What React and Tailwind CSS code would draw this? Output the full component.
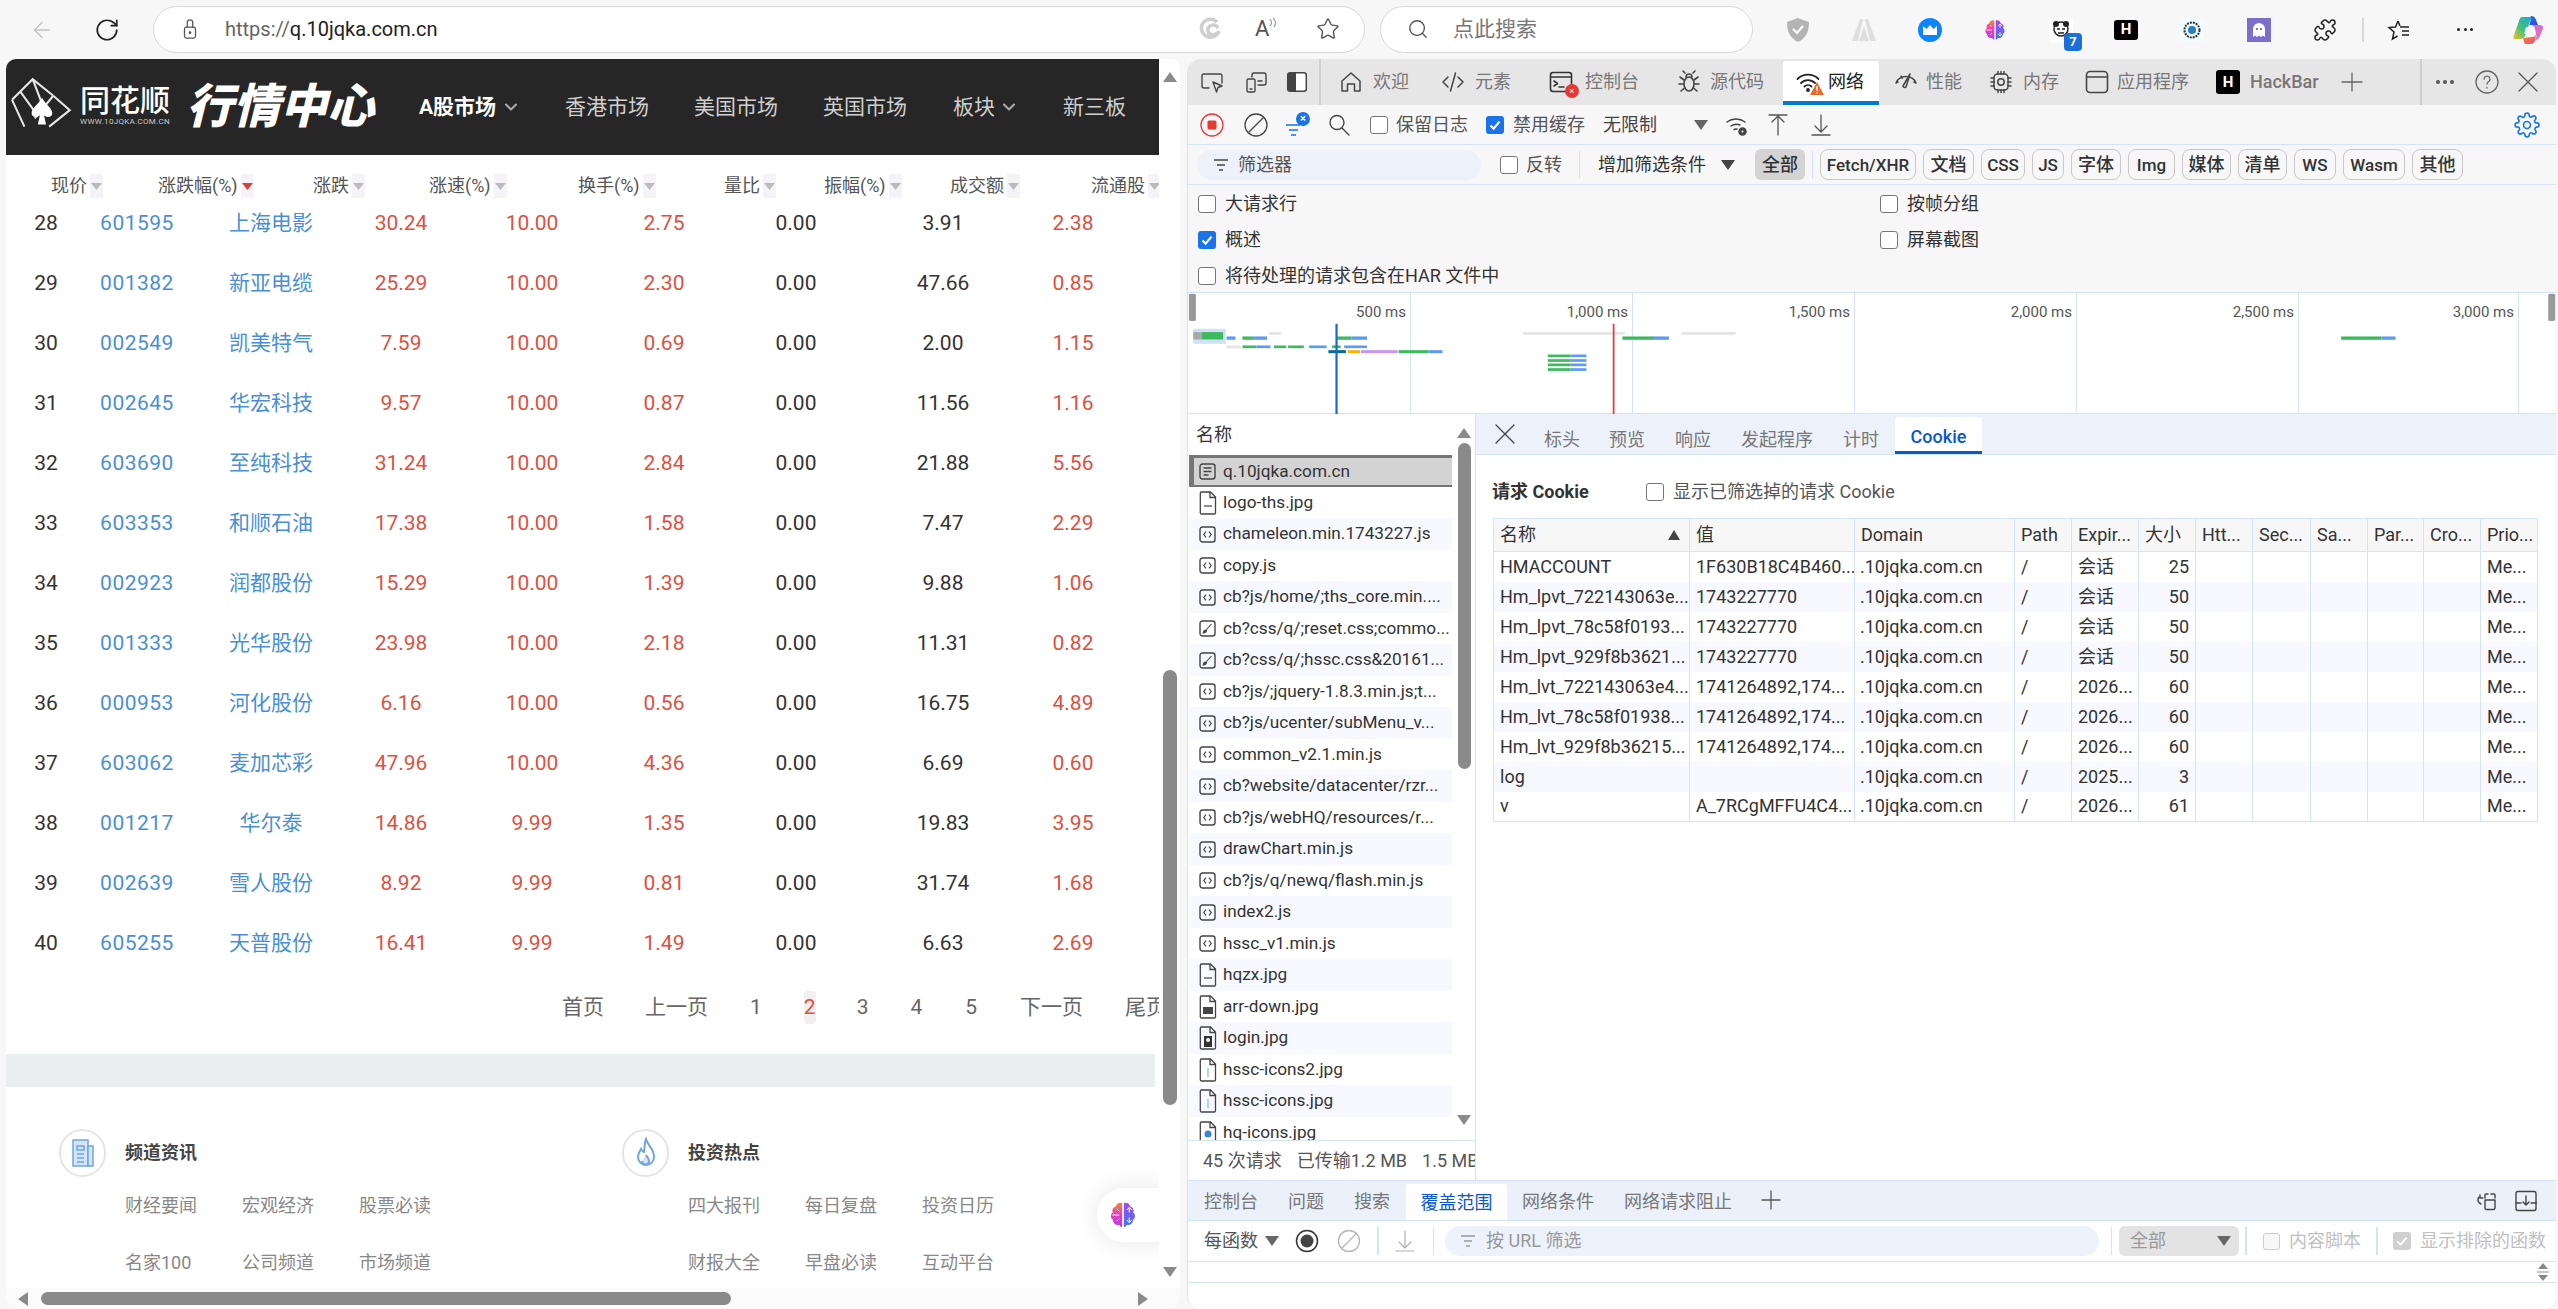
import React from 'react';
import { ArrowLeft, RotateCw, Star, Search, Puzzle, ChevronDown } from 'lucide-react';

const stocks = [
  ['28','601595','上海电影','30.24','10.00','2.75','0.00','3.91','2.38'],
  ['29','001382','新亚电缆','25.29','10.00','2.30','0.00','47.66','0.85'],
  ['30','002549','凯美特气','7.59','10.00','0.69','0.00','2.00','1.15'],
  ['31','002645','华宏科技','9.57','10.00','0.87','0.00','11.56','1.16'],
  ['32','603690','至纯科技','31.24','10.00','2.84','0.00','21.88','5.56'],
  ['33','603353','和顺石油','17.38','10.00','1.58','0.00','7.47','2.29'],
  ['34','002923','润都股份','15.29','10.00','1.39','0.00','9.88','1.06'],
  ['35','001333','光华股份','23.98','10.00','2.18','0.00','11.31','0.82'],
  ['36','000953','河化股份','6.16','10.00','0.56','0.00','16.75','4.89'],
  ['37','603062','麦加芯彩','47.96','10.00','4.36','0.00','6.69','0.60'],
  ['38','001217','华尔泰','14.86','9.99','1.35','0.00','19.83','3.95'],
  ['39','002639','雪人股份','8.92','9.99','0.81','0.00','31.74','1.68'],
  ['40','605255','天普股份','16.41','9.99','1.49','0.00','6.63','2.69'],
];
const heads = [['现价',0],['涨跌幅(%)',1],['涨跌',0],['涨速(%)',0],['换手(%)',0],['量比',0],['振幅(%)',0],['成交额',0],['流通股',0]];
const files = [
  ['q.10jqka.com.cn','doc'],['logo-ths.jpg','img'],['chameleon.min.1743227.js','js'],['copy.js','js'],
  ['cb?js/home/;ths_core.min....','js'],['cb?css/q/;reset.css;commo...','css'],['cb?css/q/;hssc.css&20161...','css'],
  ['cb?js/;jquery-1.8.3.min.js;t...','js'],['cb?js/ucenter/subMenu_v...','js'],['common_v2.1.min.js','js'],
  ['cb?website/datacenter/rzr...','js'],['cb?js/webHQ/resources/r...','js'],['drawChart.min.js','js'],
  ['cb?js/q/newq/flash.min.js','js'],['index2.js','js'],['hssc_v1.min.js','js'],['hqzx.jpg','img'],
  ['arr-down.jpg','img2'],['login.jpg','img3'],['hssc-icons2.jpg','img4'],['hssc-icons.jpg','img4'],['hq-icons.jpg','img5'],
];
const cookieHead = ['名称','值','Domain','Path','Expir...','大小','Htt...','Sec...','Sa...','Par...','Cro...','Prio...'];
const cookies = [
  ['HMACCOUNT','1F630B18C4B460...','会话','25'],
  ['Hm_lpvt_722143063e...','1743227770','会话','50'],
  ['Hm_lpvt_78c58f0193...','1743227770','会话','50'],
  ['Hm_lpvt_929f8b3621...','1743227770','会话','50'],
  ['Hm_lvt_722143063e4...','1741264892,174...','2026...','60'],
  ['Hm_lvt_78c58f01938...','1741264892,174...','2026...','60'],
  ['Hm_lvt_929f8b36215...','1741264892,174...','2026...','60'],
  ['log','','2025...','3'],
  ['v','A_7RCgMFFU4C4...','2026...','61'],
];
const pills = [
  ['Fetch/XHR','w-[96px] text-[17px]'],['文档','w-[51px] text-[18px]'],['CSS','w-[44px] text-[17px]'],['JS','w-[32px] text-[17px]'],['字体','w-[50px] text-[18px]'],['Img','w-[47px] text-[17px]'],
  ['媒体','w-[49px] text-[18px]'],['清单','w-[49px] text-[18px]'],['WS','w-[42px] text-[17px]'],['Wasm','w-[62px] text-[17px]'],['其他','w-[51px] text-[18px]'],
];
const green = [[24,460,24,22],[70,473,12,10],[178,473,16,10],[503,473,36,10],[1322,473,46,10],[70,500,16,8],[106,500,14,8],[122,500,18,8],[172,500,10,8],[248,514,34,9],[418,527,26,8],[418,541,26,8],[418,554,26,8],[418,568,26,8]];
const blue = [[52,473,10,10],[82,473,16,10],[194,473,18,10],[539,473,17,10],[1368,473,16,10],[86,500,16,8],[146,500,20,8],[186,500,26,8],[282,514,16,9],[444,527,18,8],[444,541,18,8],[444,554,18,8],[444,568,18,8]];
const gray = [[100,460,14,8],[390,460,116,8],[570,460,62,8],[52,500,16,9]];
const marks = [['500 ms','w-[221px]'],['1,000 ms','w-[222px]'],['1,500 ms','w-[222px]'],['2,000 ms','w-[222px]'],['2,500 ms','w-[222px]'],['3,000 ms','w-[220px]']];

function Ic({ children, w = 24, h = 24, sw = 1.6, c = '#444', cn = '' }) {
  return <svg width={w} height={h} viewBox="0 0 24 24" fill="none" stroke={c} strokeWidth={sw} strokeLinecap="round" strokeLinejoin="round" className={'shrink-0 ' + cn}>{children}</svg>;
}
const Tri = ({ cn = '', c = '#666' }) => <svg width="14" height="12" viewBox="0 0 14 12" className={'shrink-0 ' + cn}><path d="M0 1h14L7 11z" fill={c} /></svg>;
const Arrow = ({ active }) => (
  <span className="w-[13px] h-[24px] bg-[#f5f3f7] flex items-center justify-center shrink-0">
    <svg width="11" height="7" viewBox="0 0 11 7"><path d="M0 0h11L5.5 7z" fill={active ? '#d9403a' : '#bbb'} /></svg>
  </span>
);
const Cb = ({ checked, cn = '' }) => checked
  ? <span className={'w-[18px] h-[18px] rounded-[3px] bg-[#1a73e8] flex items-center justify-center shrink-0 ' + cn}><svg width="14" height="14" viewBox="0 0 14 14"><path d="M2.5 7.5 5.6 10.6 11.5 3.6" stroke="#fff" strokeWidth="2.2" fill="none" /></svg></span>
  : <span className={'w-[18px] h-[18px] rounded-[3px] border-[1.5px] border-[#777] bg-white shrink-0 ' + cn} />;
const HBlack = ({ s = 'w-[24px] h-[24px]' }) => <span className={s + ' rounded-[3px] bg-black text-white font-bold text-[15px] flex items-center justify-center shrink-0'}>H</span>;

function Brain({ w = 24, h = 24 }) {
  return (
    <svg width={w} height={h} viewBox="0 0 24 24" className="shrink-0">
      <defs>
        <linearGradient id="bl" x1="0" y1="0" x2="0" y2="1"><stop offset="0" stopColor="#f58a2a" /><stop offset="0.45" stopColor="#e93fbb" /><stop offset="1" stopColor="#b43df0" /></linearGradient>
        <linearGradient id="br" x1="0" y1="0" x2="0" y2="1"><stop offset="0" stopColor="#a848ee" /><stop offset="1" stopColor="#3d78ee" /></linearGradient>
      </defs>
      <path d="M11.3 2.5C9 1.6 6.6 3 6.4 5.2 4 5.600 3 8 3.800 10 1.800 11.600 2 14.800 4 16c0 2.800 2.600 4.600 5 3.800.6 1.400 1.600 2 2.300 1.700z" fill="url(#bl)" />
      <path d="M12.700 2.500C15 1.600 17.400 3 17.600 5.200 20 5.600 21 8 20.200 10c2 1.600 1.800 4.800-.2 6 0 2.800-2.600 4.600-5 3.800-.6 1.400-1.600 2-2.300 1.700z" fill="url(#br)" />
      <path d="M3.500 12H9M7 7l2 2M7 17l2-2M15 8l2-2 2 2M15 16l2 2 2-2M17 6v4M17 14v4" stroke="#fff" strokeWidth="0.8" fill="none" />
    </svg>
  );
}

function Copilot() {
  return (
    <svg width="32" height="32" viewBox="0 0 32 32" className="shrink-0">
      <defs>
        <linearGradient id="c1" x1="0" y1="1" x2="1" y2="0"><stop offset="0" stopColor="#f4c21f" /><stop offset="0.45" stopColor="#3cc07a" /><stop offset="1" stopColor="#1ea5e8" /></linearGradient>
        <linearGradient id="c2" x1="0" y1="0" x2="1" y2="1"><stop offset="0" stopColor="#1f6ff0" /><stop offset="1" stopColor="#3a46d8" /></linearGradient>
        <linearGradient id="c3" x1="0" y1="0" x2="1" y2="1"><stop offset="0" stopColor="#c86de8" /><stop offset="1" stopColor="#f06f9a" /></linearGradient>
        <linearGradient id="c4" x1="0" y1="0" x2="1" y2="1"><stop offset="0" stopColor="#f3853a" /><stop offset="1" stopColor="#ee4f7c" /></linearGradient>
      </defs>
      <path d="M10 3h12c-3 1-4 4-5 7l-4 12c-1 2-3 3-5 3H3c-1.500 0-2-1-1.500-2.500L7 7c.6-2.400 1.600-4 3-4z" fill="url(#c1)" />
      <path d="M19 2c3 0 4 1.500 5 4l2 5h-8l-1 1 2-7c.4-1.500 0-3-1-3z" fill="url(#c2)" />
      <path d="M19 11h8c2.500 0 4 1 4 2.500 0 .8-.3 1.500-.5 2.500l-3 7c-1 2-2.500 3-4 3-1 0 .5-1 1-3l-1-6c-.5-3-2-6-4.500-6z" fill="url(#c3)" />
      <path d="M11 24l9-1c2 0 3-1 4-2l-.8 5c-.5 2-2 4-4.200 4h-5c-2 0-2-3-3-6z" fill="url(#c4)" />
      <path d="M14 13h4l-2 7h-4z" fill="#fff" fillOpacity="0.85" />
    </svg>
  );
}

function FileIcon({ t }) {
  if (t === 'js' || t === 'doc' || t === 'css') {
    return (
      <svg width="17" height="17" viewBox="0 0 17 17" className="shrink-0" fill="none" stroke="#444" strokeWidth="1.4">
        <rect x="1" y="1" width="15" height="15" rx="2.500" />
        {t === 'js' && <path d="M7 5.700 4.800 8.500 7 11.300M10 5.700l2.200 2.800L10 11.300" strokeWidth="1.2" />}
        {t === 'doc' && <path d="M4.500 5h8M4.500 8.500h8M4.500 12h5" strokeWidth="1.300" />}
        {t === 'css' && <path d="M12.500 4 6.500 10.500M7 10c-1.500 0-2.500 1-2.800 3 1.800-.2 3.200-1 3.300-2.500z" fill="#444" strokeWidth="1.100" />}
      </svg>
    );
  }
  return (
    <svg width="18" height="24" viewBox="0 0 18 24" className="shrink-0" fill="none" stroke="#444" strokeWidth="1.300">
      <path d="M2.500 1h9l5 5v16a1.200 1.200 0 0 1-1.200 1H2.500a1.200 1.200 0 0 1-1.200-1V2.200A1.200 1.200 0 0 1 2.500 1zM11 1v5.500h5.500" />
      {t === 'img' && <path d="M5 15h8" stroke="#666" strokeWidth="1.500" />}
      {t === 'img2' && <path d="M4 12h10v7H4z" fill="#444" stroke="none" />}
      {t === 'img3' && <path d="M5 10h8v11H5z M9 12a2 2 0 1 0 .1 0z" fill="#333" stroke="none" />}
      {t === 'img4' && <path d="M9 10v9" stroke="#9bc2ee" strokeWidth="1.500" />}
      {t === 'img5' && <circle cx="9" cy="13" r="3.500" fill="#3b82d6" stroke="none" />}
    </svg>
  );
}

function CircleIcon({ kind }) {
  return (
    <span className="w-[47px] h-[48px] rounded-full border-2 border-[#e4e6e6] bg-white flex items-center justify-center shrink-0">
      {kind === 'news'
        ? <svg width="26" height="30" viewBox="0 0 26 30" fill="#d3e4f7" stroke="#6ea6de" strokeWidth="1.500"><path d="M3 2h15v26H3z" /><path d="M18 8h5v20h-5z" /><path d="M7 8h7v4H7zM7 16h7M7 20h7M7 24h7" fill="none" /></svg>
        : <svg width="26" height="32" viewBox="0 0 26 32" fill="none" stroke="#6ea6de" strokeWidth="2"><path d="M13 2c1 6 8 9 8 18a8 8 0 0 1-16 0c0-4 2-6 3-8 1 2 2 3 3 3 1-4 0-9 2-13z" /><path d="M13 18c1 2 3 3 3 6a3.500 3.500 0 0 1-7 0" fill="#d3e4f7" /></svg>}
    </span>
  );
}

function FooterCol({ icon, title, rows, cn }) {
  return (
    <div className={'shrink-0 ' + cn}>
      <div className="flex items-center gap-[19px]">
        <CircleIcon kind={icon} />
        <span className="text-[18px] font-bold text-[#444] leading-[24px]">{title}</span>
      </div>
      <div className="pl-[66px]">
        {rows.map((r, i) => (
          <div key={i} className="grid grid-cols-[117px_117px_117px] h-[57px] items-center text-[18px] text-[#888]">
            {r.map(x => <span key={x}>{x}</span>)}
          </div>
        ))}
      </div>
    </div>
  );
}

function TopBar() {
  return (
    <div className="h-[59px] flex items-center shrink-0">
      <ArrowLeft size={26} strokeWidth={1.2} className="ml-[29px] text-[#c2c2c2]" />
      <RotateCw size={26} strokeWidth={1.6} className="ml-[39px] text-[#222] shrink-0" />
      <div className="ml-[33px] w-[1212px] h-[47px] rounded-full border-[1.5px] border-[#d8d8d8] bg-white flex items-center pl-[25px] pr-[24px] shrink-0 mt-[-1px]">
        <Ic w={22} h={24} sw={1.4} c="#555"><rect x="6" y="10" width="12" height="12" rx="2" /><path d="M9 10V5a3 3 0 0 1 6 0v5" /><circle cx="12" cy="16" r="0.8" fill="#555" /></Ic>
        <span className="ml-[24px] text-[20px] text-[#222] leading-[24px]"><span className="text-[#666]">https://</span>q.10jqka.com.cn</span>
        <svg width="24" height="24" viewBox="0 0 24 24" fill="none" stroke="#cfcfcf" strokeWidth="3.500" className="ml-auto shrink-0"><path d="M21 14a9 9 0 1 1-2-9M20 11c-3-5-11-3-10 3 .5 4 6 5 10 2" /></svg>
        <span className="ml-[33px] w-[24px] text-[22px] text-[#555] leading-[24px] flex"><span>A</span><svg width="8" height="14" viewBox="0 0 8 14" fill="none" stroke="#777" strokeWidth="1"><path d="M1 2c2 2 2 5 0 7M4 1c3 3 3 6 1 9" /></svg></span>
        <Star size={24} strokeWidth={1.4} className="ml-[37px] text-[#555] shrink-0" />
      </div>
      <div className="ml-[15px] w-[373px] h-[47px] rounded-full border-[1.5px] border-[#d8d8d8] bg-white flex items-center pl-[26px] shrink-0 mt-[-1px]">
        <Search size={22} strokeWidth={1.5} className="text-[#555] shrink-0" />
        <span className="ml-[24px] text-[21px] text-[#777] leading-[24px]">点此搜索</span>
      </div>
      <svg width="24" height="26" viewBox="0 0 24 26" className="ml-[33px] shrink-0"><path d="M12 1 23 5c0 10-3 16-11 20C4 21 1 15 1 5z" fill="#b4b4b4" /><path d="M7 12l4 4 6-7" stroke="#fff" strokeWidth="2.200" fill="none" /></svg>
      <svg width="24" height="24" viewBox="0 0 24 24" className="ml-[42px] shrink-0"><path d="M0 23 8 1h3l-5 22zM24 23 16 1h-3l5 22zM7 23l5-15 5 15z" fill="#dedede" /></svg>
      <svg width="24" height="24" viewBox="0 0 24 24" className="ml-[42px] shrink-0"><circle cx="12" cy="12" r="12" fill="#0a84ff" /><path d="M5 8l3.500 3L12 7l3.500 4L19 8v9H5z" fill="#fff" /></svg>
      <span className="ml-[41px]"><Brain /></span>
      <span className="ml-[42px] w-[24px] h-[24px] bg-white relative shrink-0 flex items-center justify-center">
        <svg width="20" height="20" viewBox="0 0 20 20"><circle cx="10" cy="9" r="7" fill="none" stroke="#222" strokeWidth="1.500" /><circle cx="5" cy="4" r="3" fill="#222" /><circle cx="15" cy="4" r="3" fill="#222" /><path d="M6 9h3M11 9h3M7 13h6" stroke="#222" strokeWidth="1.500" /></svg>
        <span className="absolute left-[15px] top-[15px] w-[18px] h-[18px] rounded-[4px] bg-[#1a6fd8] text-white text-[13px] font-bold flex items-center justify-center">7</span>
      </span>
      <span className="ml-[41px]"><HBlack s="w-[24px] h-[20px]" /></span>
      <span className="ml-[42px] w-[24px] h-[24px] bg-[#f4fbfb] flex items-center justify-center shrink-0">
        <svg width="20" height="20" viewBox="0 0 20 20"><circle cx="10" cy="10" r="7.500" fill="none" stroke="#24384a" strokeWidth="2" strokeDasharray="2 1" /><circle cx="10" cy="10" r="4" fill="#2a7fc0" /></svg>
      </span>
      <span className="ml-[43px] w-[24px] h-[24px] bg-[#7b6fcb] flex items-center justify-center shrink-0">
        <svg width="14" height="16" viewBox="0 0 14 16"><path d="M1 15V7a6 6 0 0 1 12 0v8l-2-1.500L9 15l-2-1.500L5 15l-2-1.500z" fill="#fff" /><circle cx="5" cy="7" r="1" fill="#555" /><circle cx="9" cy="7" r="1" fill="#555" /></svg>
      </span>
      <Puzzle size={24} strokeWidth={1.5} className="ml-[42px] text-[#222] shrink-0" />
      <span className="ml-[25px] w-[2px] h-[24px] bg-[#d8d8d8] shrink-0" />
      <svg width="24" height="24" viewBox="0 0 24 24" fill="none" stroke="#222" strokeWidth="1.500" className="ml-[23px] shrink-0"><path d="M11 3 8.500 9 2 9.500 7 14l-1.500 7 5-3M13 9h9M15 13h7M15 17h7M11 3l2 5" /></svg>
      <span className="ml-[42px] w-[24px] flex justify-center gap-[3.500px] shrink-0">
        <i className="w-[3px] h-[3px] rounded-full bg-[#222]" /><i className="w-[3px] h-[3px] rounded-full bg-[#222]" /><i className="w-[3px] h-[3px] rounded-full bg-[#222]" />
      </span>
      <span className="ml-[35px]"><Copilot /></span>
    </div>
  );
}

function StockPage() {
  return (
    <div className="ml-[6px] w-[1174px] shrink-0 bg-white rounded-t-[10px] rounded-b-[14px] overflow-hidden flex flex-col">
      <div className="flex flex-1 min-h-0">
        <div className="w-[1153px] shrink-0 relative overflow-hidden">
          <div className="h-[96px] bg-[#262626] flex items-center relative">
            <svg width="68" height="56" viewBox="0 0 66 54" className="ml-[4px] mt-[-4px] shrink-0" fill="none" stroke="#e8e8e8" strokeWidth="2"><path d="M2 22 22 2l20 16M2 22l12 26M10 14l16 22M22 2l10 26M42 18 24 40" /><path d="M38 48 58 32 42 18" /><path d="M31 20c-4 7-10 10-10 15 0 4 5 5 8 2l-2 9h8l-2-9c3 3 8 2 8-2 0-5-6-8-10-15z" fill="#fff" stroke="none" /></svg>
            <div className="ml-[2px] w-[96px] shrink-0 mt-[-3px]">
              <div className="text-[30px] leading-[32px] font-medium text-white">同花顺</div>
              <div className="text-[8px] leading-[9px] text-[#ccc] tracking-[0.3px] whitespace-nowrap">WWW.10JQKA.COM.CN</div>
            </div>
            <span className="ml-[10px] text-[47px] leading-[50px] font-black italic text-white w-[188px] shrink-0 whitespace-nowrap">行情中心</span>
            <span className="ml-[45px] text-[21px] font-bold text-white leading-[28px]">A股市场</span>
            <ChevronDown size={20} strokeWidth={2.5} className="ml-[5px] text-[#aaa] shrink-0" />
            <span className="ml-[44px] text-[21px] text-[#cfcfcf] leading-[28px]">香港市场</span>
            <span className="ml-[45px] text-[21px] text-[#cfcfcf] leading-[28px]">美国市场</span>
            <span className="ml-[45px] text-[21px] text-[#cfcfcf] leading-[28px]">英国市场</span>
            <span className="ml-[46px] text-[21px] text-[#cfcfcf] leading-[28px]">板块</span>
            <ChevronDown size={20} strokeWidth={2.5} className="ml-[4px] text-[#aaa] shrink-0" />
            <span className="ml-[44px] text-[21px] text-[#cfcfcf] leading-[28px]">新三板</span>
          </div>
          <div className="h-[37px] pl-[45px] pt-[19px] grid grid-cols-[107px_155px_116px_149px_146px_100px_126px_141px_100px] items-center text-[18px] leading-[24px] text-[#555] whitespace-nowrap">
            {heads.map(([t, a]) => <span key={t} className="flex items-center gap-[3px]">{t}<Arrow active={a} /></span>)}
          </div>
          {stocks.map(r => (
            <div key={r[0]} className="grid grid-cols-[80px_98px_174px_86px_176px_88px_176px_118px_142px] h-[60px] pt-[1px] items-center text-center text-[21px] leading-[28px] text-[#333]">
              <span>{r[0]}</span>
              <span className="text-[#4a8fd6] tracking-[0.5px] pl-[4px]">{r[1]}</span>
              <span className="text-[#4a8fd6]">{r[2]}</span>
              <span className="text-[#e0503f]">{r[3]}</span>
              <span className="text-[#e0503f]">{r[4]}</span>
              <span className="text-[#e0503f]">{r[5]}</span>
              <span>{r[6]}</span>
              <span>{r[7]}</span>
              <span className="text-[#e0503f]">{r[8]}</span>
            </div>
          ))}
          <div className="mt-[19px] h-[33px] flex items-center text-[21px] text-[#666] whitespace-nowrap">
            <span className="ml-[556px]">首页</span>
            <span className="ml-[41px]">上一页</span>
            <span className="ml-[42px]">1</span>
            <span className="ml-[42px] w-[30px] h-[33px] bg-[#f0f0f0] rounded-[3px] text-[#e0503f] flex items-center justify-center">2</span>
            <span className="ml-[41px]">3</span>
            <span className="ml-[42px]">4</span>
            <span className="ml-[43px]">5</span>
            <span className="ml-[43px]">下一页</span>
            <span className="ml-[42px]">尾页</span>
          </div>
          <div className="mt-[30px] h-[33px] w-[1149px] bg-[#ebeeee]" />
          <div className="mt-[42px] flex pl-[53px]">
            <FooterCol icon="news" title="频道资讯" cn="w-[563px]" rows={[['财经要闻','宏观经济','股票必读'],['名家100','公司频道','市场频道']]} />
            <FooterCol icon="fire" title="投资热点" cn="w-[500px]" rows={[['四大报刊','每日复盘','投资日历'],['财报大全','早盘必读','互动平台']]} />
          </div>
          <div className="absolute left-[1091px] top-[1129px] w-[70px] h-[54px] bg-white rounded-l-[27px] shadow-[0_0_24px_rgba(0,0,0,0.10)] flex items-center pl-[11px]">
            <Brain w={30} h={34} />
          </div>
        </div>
        <div className="w-[21px] shrink-0 flex flex-col items-center bg-white pt-[12px] pb-[10px]">
          <svg width="14" height="12" viewBox="0 0 14 12"><path d="M7 1 14 11H0z" fill="#8a8a8a" /></svg>
          <div className="mt-[587px] w-[14px] h-[435px] rounded-full bg-[#8a8a8a]" />
          <svg width="14" height="12" viewBox="0 0 14 12" className="mt-auto"><path d="M0 1h14L7 11z" fill="#8a8a8a" /></svg>
        </div>
      </div>
      <div className="h-[21px] shrink-0 flex items-center bg-[#fbfbfb]">
        <svg width="12" height="14" viewBox="0 0 12 14" className="ml-[11px] shrink-0"><path d="M11 0v14L1 7z" fill="#8a8a8a" /></svg>
        <div className="ml-[12px] w-[690px] h-[13px] rounded-full bg-[#8a8a8a] shrink-0" />
        <svg width="12" height="14" viewBox="0 0 12 14" className="ml-auto mr-[31px] shrink-0"><path d="M1 0v14l10-7z" fill="#8a8a8a" /></svg>
      </div>
    </div>
  );
}

function DevTabs() {
  return (
    <div className="h-[46px] bg-[#e6e6e6] flex items-center shrink-0 text-[18px] text-[#777] leading-[24px] whitespace-nowrap">
      <Ic cn="ml-[12px]" sw={1.4}><path d="M9 18H4a2 2 0 0 1-2-2V6a2 2 0 0 1 2-2h16a2 2 0 0 1 2 2v7" /><path d="M13 12l9 4-4 1.500L16.500 22z" /></Ic>
      <Ic cn="ml-[20px]" sw={1.4}><path d="M8 7V5a2 2 0 0 1 2-2h10a2 2 0 0 1 2 2v8a2 2 0 0 1-2 2h-6" /><rect x="3" y="9" width="8" height="13" rx="1.500" /><path d="M6 19h2M14 11h4" /></Ic>
      <svg width="24" height="24" viewBox="0 0 24 24" className="ml-[17px] shrink-0"><rect x="2.700" y="2.700" width="18.600" height="18.600" rx="2.500" fill="#fff" stroke="#444" strokeWidth="1.500" /><path d="M3 5a2 2 0 0 1 2-2h6v18H5a2 2 0 0 1-2-2z" fill="#444" /></svg>
      <span className="ml-[10px] w-[2px] h-[46px] bg-[#cfcfcf] shrink-0" />
      <Ic cn="ml-[18px]" sw={1.5}><path d="M3 21V11l9-8 9 8v10h-5.500v-7h-7v7z" /></Ic>
      <span className="ml-[10px]">欢迎</span>
      <Ic cn="ml-[32px]" sw={1.5}><path d="M7 7l-5 5 5 5M17 7l5 5-5 5M14.500 3l-5 18" /></Ic>
      <span className="ml-[10px]">元素</span>
      <span className="ml-[38px] relative shrink-0">
        <Ic sw={1.6} c="#333"><rect x="1.500" y="2.500" width="21" height="19" rx="2.500" /><path d="M2 7h20M5 11l3.500 2.500L5 16M10 17h5" /></Ic>
        <span className="absolute left-[16px] top-[14px] w-[14px] h-[14px] rounded-full bg-[#e53935] text-white text-[9px] leading-[14px] text-center">×</span>
      </span>
      <span className="ml-[12px]">控制台</span>
      <Ic cn="ml-[38px]" sw={1.6}><ellipse cx="12" cy="14" rx="5" ry="7" /><path d="M9 7a3 3 0 0 1 6 0M7 10 3 7M17 10l4-3M7 14H2M17 14h5M7.500 18 4 21M16.500 18 20 21M8 3 6 1M16 3l2-2" /></Ic>
      <span className="ml-[9px]">源代码</span>
      <div className="ml-[19px] w-[96px] self-stretch mt-[2px] bg-white rounded-t-[3px] border-b-[4px] border-[#0078d4] flex items-center pl-[13px] text-[#222] shrink-0 pt-[2px]">
        <span className="relative shrink-0">
          <Ic sw={1.8} c="#222"><path d="M1.500 9a15 15 0 0 1 21 0M5 13a10 10 0 0 1 14 0M8.500 16.500a5 5 0 0 1 7 0" /><circle cx="12" cy="20" r="1" fill="#222" /></Ic>
          <svg width="14" height="13" viewBox="0 0 14 13" className="absolute left-[14px] top-[12px]"><path d="M7 0 14 13H0z" fill="#ea6a2a" /><path d="M7 4v5M7 10.500v1" stroke="#fff" strokeWidth="1.300" /></svg>
        </span>
        <span className="ml-[8px]">网络</span>
      </div>
      <Ic cn="ml-[15px]" sw={1.5}><path d="M2 13a11 11 0 0 1 20 0M2 13l2-1M22 13l-2-1M7 6l1.500 2M16 4l-4 13a1.800 1.800 0 0 1-3-1l7-12z" /></Ic>
      <span className="ml-[8px]">性能</span>
      <Ic cn="ml-[27px]" sw={1.5}><rect x="5" y="4" width="14" height="16" rx="3.500" /><circle cx="12" cy="12" r="3.200" /><path d="M9 4V1.500M12 4V1.500M15 4V1.500M9 20v2.500M12 20v2.500M15 20v2.500M5 8H2M5 12H2M5 16H2M19 8h3M19 12h3M19 16h3" /></Ic>
      <span className="ml-[10px]">内存</span>
      <Ic cn="ml-[26px]" sw={1.6}><rect x="1.500" y="1.500" width="21" height="21" rx="3.500" /><path d="M2 7h20" /></Ic>
      <span className="ml-[8px]">应用程序</span>
      <span className="ml-[27px]"><HBlack /></span>
      <span className="ml-[10px] w-[68px] font-medium">HackBar</span>
      <Ic cn="ml-[22px]" sw={1.3} c="#666"><path d="M12 3v18M2 12h20" /></Ic>
      <span className="ml-[56px] w-[2px] h-[46px] bg-[#cfcfcf] shrink-0" />
      <span className="ml-[11px] w-[24px] flex justify-center gap-[3px] shrink-0">
        <i className="w-[4px] h-[4px] rounded-full bg-[#555]" /><i className="w-[4px] h-[4px] rounded-full bg-[#555]" /><i className="w-[4px] h-[4px] rounded-full bg-[#555]" />
      </span>
      <Ic cn="ml-[18px]" sw={1.3} c="#666"><circle cx="12" cy="12" r="11" /><path d="M9 9a3 3 0 1 1 4.500 2.700c-1 .6-1.500 1.200-1.500 2.300M12 17.500v.5" /></Ic>
      <Ic cn="ml-[17px]" sw={1.3} c="#555"><path d="M3 3l18 18M21 3 3 21" /></Ic>
    </div>
  );
}

function ToolRow1() {
  return (
    <div className="h-[40px] bg-[#f7f7f7] border-b border-[#d6e2f5] flex items-center shrink-0 text-[18px] text-[#555] leading-[24px] whitespace-nowrap">
      <svg width="24" height="24" viewBox="0 0 24 24" className="ml-[12px] shrink-0"><circle cx="12" cy="12" r="11" fill="none" stroke="#e53935" strokeWidth="1.300" /><rect x="7.500" y="7.500" width="9" height="9" rx="1.500" fill="#e53935" /></svg>
      <Ic cn="ml-[20px]" sw={1.3}><circle cx="12" cy="12" r="11" /><path d="M19 5 5 19" /></Ic>
      <span className="ml-[17px] relative w-[24px] h-[24px] shrink-0">
        <svg width="24" height="24" viewBox="0 0 24 24" fill="none" stroke="#1a73e8" strokeWidth="1.500" className="absolute top-[2px]"><path d="M1 10h14M4 15h9M6 20h5" /></svg>
        <span className="absolute left-[11px] top-[-1px] w-[14px] h-[14px] rounded-full bg-[#1a73e8] text-white text-[11px] leading-[14px] text-center font-bold">×</span>
      </span>
      <Ic cn="ml-[18px]" sw={1.4}><circle cx="10" cy="9.500" r="7" /><path d="M15 15l7 7" /></Ic>
      <Cb cn="ml-[19px]" />
      <span className="ml-[8px]">保留日志</span>
      <Cb checked cn="ml-[18px]" />
      <span className="ml-[9px]">禁用缓存</span>
      <span className="ml-[18px] text-[#444]">无限制</span>
      <Tri cn="ml-[37px]" />
      <Ic cn="ml-[17px]" sw={1.5}><path d="M2 9a15 15 0 0 1 18 0M6 13a9 9 0 0 1 9-1M9 16.500a4 4 0 0 1 3-.5" /><circle cx="17.500" cy="18.500" r="3.500" fill="#444" /><circle cx="17.500" cy="18.500" r="1" fill="#fff" stroke="none" /></Ic>
      <Ic cn="ml-[17px]" sw={1.3} c="#555"><path d="M3 2h18M12 22V3M6 9l6-6 6 6" /></Ic>
      <Ic cn="ml-[19px]" sw={1.3} c="#555"><path d="M3 22h18M12 2v17M6 13l6 6 6-6" /></Ic>
      <svg width="26" height="26" viewBox="0 0 24 24" fill="none" stroke="#1a73e8" strokeWidth="1.500" className="ml-auto mr-[16px] shrink-0"><circle cx="12" cy="12" r="3.200" /><path d="M19.400 15a1.650 1.650 0 0 0 .33 1.820l.06.06a2 2 0 1 1-2.830 2.830l-.06-.06a1.650 1.650 0 0 0-2.800 1.170V21a2 2 0 1 1-4 0v-.09a1.650 1.650 0 0 0-2.770-1.190l-.06.06a2 2 0 1 1-2.830-2.830l.06-.06A1.650 1.650 0 0 0 3 14H3a2 2 0 1 1 0-4h.09A1.650 1.650 0 0 0 4.280 7.230l-.06-.06a2 2 0 1 1 2.830-2.830l.06.06A1.650 1.650 0 0 0 10 3.200V3a2 2 0 1 1 4 0v.09a1.650 1.650 0 0 0 2.800 1.170l.06-.06a2 2 0 1 1 2.830 2.830l-.06.06A1.650 1.650 0 0 0 21 10h.09a2 2 0 1 1 0 4H21a1.650 1.650 0 0 0-1.600 1z" /></svg>
    </div>
  );
}

function ToolRow2() {
  return (
    <div className="h-[40px] bg-[#f7f7f7] border-b border-[#d6e2f5] flex items-center shrink-0 text-[18px] text-[#333] leading-[24px] whitespace-nowrap">
      <div className="ml-[9px] w-[284px] h-[30px] rounded-full bg-[#edf2fa] flex items-center pl-[16px] text-[#555] shrink-0">
        <svg width="16" height="14" viewBox="0 0 16 14" fill="none" stroke="#444" strokeWidth="1.600"><path d="M1 2h14M4 7h8M6 12h4" /></svg>
        <span className="ml-[9px]">筛选器</span>
      </div>
      <Cb cn="ml-[19px]" />
      <span className="ml-[8px] text-[#555]">反转</span>
      <span className="ml-[17px] w-[1px] h-[28px] bg-[#d6e2f5] shrink-0" />
      <span className="ml-[18px]">增加筛选条件</span>
      <Tri cn="ml-[15px]" c="#444" />
      <span className="ml-[20px] w-[50px] h-[31px] rounded-[6px] bg-[#d3d3d3] flex items-center justify-center font-medium">全部</span>
      <span className="ml-[7px] w-[1px] h-[28px] bg-[#d6e2f5] shrink-0" />
      <div className="ml-[7px] flex gap-[7px]">
        {pills.map(([t, w]) => <span key={t} className={w + ' h-[31px] rounded-[8px] border border-[#c8c8c8] flex items-center justify-center font-medium shrink-0'}>{t}</span>)}
      </div>
    </div>
  );
}

function Settings() {
  const Opt = ({ t, c }) => <div className="flex items-center h-[36px] gap-[9px]"><Cb checked={c} /><span>{t}</span></div>;
  return (
    <div className="h-[108px] bg-[#f7f7f7] border-b border-[#d6e2f5] pl-[10px] pt-[1px] grid grid-cols-[682px_1fr] grid-rows-[36px_36px_35px] shrink-0 text-[18px] text-[#333] leading-[24px]">
      <Opt t="大请求行" /><Opt t="按帧分组" />
      <Opt t="概述" c /><Opt t="屏幕截图" />
      <Opt t="将待处理的请求包含在HAR 文件中" /><div />
    </div>
  );
}

function Overview() {
  return (
    <div className="h-[121px] relative bg-white border-b border-[#d6e2f5] shrink-0">
      <div className="flex h-full pl-[2px] text-[15px] leading-[20px] text-[#555] whitespace-nowrap">
        {marks.map(([t, w]) => <div key={t} className={w + ' h-full border-r border-[#d6e2f5] text-right pr-[4px] pt-[9px] shrink-0'}>{t}</div>)}
      </div>
      <svg className="absolute left-0 top-0" width="1369" height="121" viewBox="8 343 1560 362" preserveAspectRatio="none">
        <rect x="14" y="450" width="37" height="45" fill="#cfe0f8" />
        <rect x="14" y="460" width="10" height="22" fill="#a8a8a8" />
        {gray.map((r, i) => <rect key={i} x={r[0]} y={r[1]} width={r[2]} height={r[3]} fill="#e4e4e4" />)}
        {green.map((r, i) => <rect key={i} x={r[0]} y={r[1]} width={r[2]} height={r[3]} fill="#3cba5d" />)}
        {blue.map((r, i) => <rect key={i} x={r[0]} y={r[1]} width={r[2]} height={r[3]} fill="#5b9bf5" />)}
        <rect x="168" y="514" width="20" height="9" fill="#0b6b8b" />
        <rect x="190" y="514" width="14" height="9" fill="#f2b707" />
        <rect x="205" y="514" width="42" height="9" fill="#c896ee" />
        <rect x="176" y="435" width="2.500" height="270" fill="#1a66d6" />
        <rect x="492" y="435" width="2" height="270" fill="#d9403a" />
        <rect x="9" y="345" width="8" height="82" rx="3" fill="#999" />
        <rect x="1558" y="345" width="8" height="82" rx="3" fill="#999" />
      </svg>
    </div>
  );
}

function NameColumn() {
  return (
    <div className="w-[288px] shrink-0 border-r border-[#d6e2f5] flex flex-col">
      <div className="flex-1 min-h-0 flex">
        <div className="w-[263px] ml-[1px] shrink-0 flex flex-col min-h-0">
          <div className="h-[41px] flex items-center pl-[7px] text-[18px] text-[#333] shrink-0">名称</div>
          <div className="flex-1 min-h-0 overflow-hidden">
            {files.map(([n, t], i) => (
              <div key={n} className={'h-[31.500px] pt-[1px] flex items-center text-[17.200px] text-[#333] whitespace-nowrap ' + (i === 0 ? 'bg-[#d3d3d3] border-t-[3px] border-l-[5px] border-b-[2px] border-[#767676] pl-[5px]' : 'pl-[10px] ' + (i % 2 === 0 ? 'bg-[#f7f9fe]' : 'bg-white'))}>
                <span className="w-[17px] flex justify-center shrink-0"><FileIcon t={t} /></span>
                <span className="ml-[7px]">{n}</span>
              </div>
            ))}
          </div>
        </div>
        <div className="w-[24px] shrink-0 flex flex-col items-center pt-[13px] pb-[12px]">
          <svg width="14" height="12" viewBox="0 0 14 12"><path d="M7 1 14 11H0z" fill="#8a8a8a" /></svg>
          <div className="mt-[4px] w-[13px] h-[326px] rounded-full bg-[#8a8a8a]" />
          <svg width="14" height="12" viewBox="0 0 14 12" className="mt-auto mb-[2px]"><path d="M0 1h14L7 11z" fill="#8a8a8a" /></svg>
        </div>
      </div>
      <div className="h-[40px] border-t border-[#d6e2f5] flex items-center text-[18px] text-[#555] whitespace-nowrap overflow-hidden shrink-0 pl-[15px]">
        <span>45 次请求</span>
        <span className="ml-[15px]">已传输1.2 MB</span>
        <span className="ml-[15px]">1.5 MB</span>
      </div>
    </div>
  );
}

function Detail() {
  return (
    <div className="flex-1 min-w-0 bg-white flex flex-col">
      <div className="h-[41px] bg-[#edf2fa] border-b border-[#d6e2f5] flex items-end text-[18px] text-[#777] leading-[24px] pb-0 shrink-0 whitespace-nowrap">
        <Ic cn="ml-[17px] self-start mt-[8px]" sw={1.3} c="#444"><path d="M3 3l18 18M21 3 3 21" /></Ic>
        <span className="ml-[27px] pb-[2px]">标头</span>
        <span className="ml-[29px] pb-[2px]">预览</span>
        <span className="ml-[30px] pb-[2px]">响应</span>
        <span className="ml-[30px] pb-[2px]">发起程序</span>
        <span className="ml-[30px] pb-[2px]">计时</span>
        <span className="ml-[16px] w-[87px] h-[37px] bg-white rounded-t-[3px] border-b-[3px] border-[#0b57d0] text-[#0b57d0] flex items-center justify-center font-medium pt-[5px]">Cookie</span>
      </div>
      <div className="h-[63px] pt-[10px] flex items-center text-[18px] leading-[24px] text-[#333] pl-[16px] shrink-0">
        <span className="w-[154px] font-bold">请求 Cookie</span>
        <Cb />
        <span className="ml-[9px] text-[#555]">显示已筛选掉的请求 Cookie</span>
      </div>
      <table className="ml-[17px] w-[1044px] table-fixed border-collapse border border-[#d6e2f5] text-[18px] leading-[24px] text-[#333] whitespace-nowrap">
        <colgroup>
          <col className="w-[196px]" /><col className="w-[165px]" /><col className="w-[160px]" /><col className="w-[57px]" />
          <col className="w-[67px]" /><col className="w-[57px]" /><col className="w-[57px]" /><col className="w-[58px]" />
          <col className="w-[57px]" /><col className="w-[56px]" /><col className="w-[57px]" /><col className="w-[57px]" />
        </colgroup>
        <thead>
          <tr className="h-[33px] bg-[#f7f7f7]">
            {cookieHead.map((h, i) => (
              <th key={h} className="border border-[#d6e2f5] px-[6px] font-normal text-left overflow-hidden">
                {i === 0 ? <span className="flex items-center justify-between pr-[3px]"><span>{h}</span><svg width="12" height="10" viewBox="0 0 12 10"><path d="M6 0l6 10H0z" fill="#444" /></svg></span> : h}
              </th>
            ))}
          </tr>
        </thead>
        <tbody>
          {cookies.map((c, i) => (
            <tr key={c[0]} className={'h-[30px] ' + (i % 2 === 1 ? 'bg-[#f7f9fe]' : 'bg-white')}>
              <td className="border-x border-[#d6e2f5] px-[6px] overflow-hidden">{c[0]}</td>
              <td className="border-x border-[#d6e2f5] px-[6px] overflow-hidden">{c[1]}</td>
              <td className="border-x border-[#d6e2f5] px-[5px] overflow-hidden">.10jqka.com.cn</td>
              <td className="border-x border-[#d6e2f5] px-[6px]">/</td>
              <td className="border-x border-[#d6e2f5] px-[6px] overflow-hidden">{c[2]}</td>
              <td className="border-x border-[#d6e2f5] px-[6px] text-right">{c[3]}</td>
              <td className="border-x border-[#d6e2f5]" /><td className="border-x border-[#d6e2f5]" /><td className="border-x border-[#d6e2f5]" /><td className="border-x border-[#d6e2f5]" /><td className="border-x border-[#d6e2f5]" />
              <td className="border-x border-[#d6e2f5] px-[6px] overflow-hidden">Me...</td>
            </tr>
          ))}
        </tbody>
      </table>
    </div>
  );
}

function Drawer() {
  return (
    <div className="shrink-0">
      <div className="h-[41px] bg-[#ebf0f9] border-y border-[#d6e2f5] flex items-end text-[18px] text-[#777] leading-[24px] whitespace-nowrap">
        <span className="ml-[16px] pb-[6px]">控制台</span>
        <span className="ml-[30px] pb-[6px]">问题</span>
        <span className="ml-[30px] pb-[6px]">搜索</span>
        <span className="ml-[16px] w-[101px] h-[36px] bg-white text-[#0b57d0] flex items-center justify-center pt-[2px] rounded-t-[3px]">覆盖范围</span>
        <span className="ml-[15px] pb-[6px]">网络条件</span>
        <span className="ml-[30px] pb-[6px]">网络请求阻止</span>
        <Ic cn="ml-[27px] self-center mt-[-2px]" sw={1.3} c="#555"><path d="M12 3v18M3 12h18" /></Ic>
        <Ic cn="ml-auto self-center" sw={1.4} c="#444"><path d="M10 9V6a1 1 0 0 1 1-1h2M16 5h3a1 1 0 0 1 1 1v3M10 11h10v8a1.500 1.500 0 0 1-1.500 1.500h-7A1.500 1.500 0 0 1 10 19zM6 15c-2-1-3-2-3-4s1-3 2-3M5 6v3h3" /></Ic>
        <Ic cn="ml-[15px] mr-[18px] self-center" sw={1.400} c="#444"><rect x="2" y="2.500" width="20" height="19" rx="2" /><path d="M2 14h5M17 14h5M12 7v9M9 13l3 3 3-3" /></Ic>
      </div>
      <div className="h-[41px] border-b border-[#d6e2f5] flex items-center text-[18px] leading-[24px] text-[#555] whitespace-nowrap bg-white">
        <span className="ml-[16px]">每函数</span>
        <Tri cn="ml-[7px]" />
        <svg width="24" height="24" viewBox="0 0 24 24" className="ml-[16px] shrink-0"><circle cx="12" cy="12" r="10.500" fill="none" stroke="#333" strokeWidth="1.500" /><circle cx="12" cy="12" r="6.500" fill="#444" /></svg>
        <Ic cn="ml-[18px]" sw={1.3} c="#b5b5b5"><circle cx="12" cy="12" r="10.500" /><path d="M19 5 5 19" /></Ic>
        <span className="ml-[16px] w-[2px] h-[28px] bg-[#d6e2f5] shrink-0" />
        <Ic cn="ml-[14px]" sw={1.200} c="#b0b0b0"><path d="M3 22h18M12 2v17M6 13l6 6 6-6" /></Ic>
        <span className="ml-[16px] w-[1px] h-[28px] bg-[#d6e2f5] shrink-0" />
        <div className="ml-[11px] w-[654px] h-[30px] rounded-full bg-[#edf2fa] flex items-center pl-[15px] text-[#999] shrink-0">
          <svg width="16" height="14" viewBox="0 0 16 14" fill="none" stroke="#999" strokeWidth="1.600"><path d="M1 2h14M4 7h8M6 12h4" /></svg>
          <span className="ml-[10px]">按 URL 筛选</span>
        </div>
        <span className="ml-[12px] w-[1px] h-[28px] bg-[#d6e2f5] shrink-0" />
        <div className="ml-[7px] w-[120px] h-[30px] rounded-[6px] bg-[#e3e3e3] flex items-center pl-[11px] text-[#999] shrink-0">
          <span>全部</span><Tri cn="ml-auto mr-[8px]" c="#666" />
        </div>
        <span className="ml-[6px] w-[2px] h-[28px] bg-[#d6e2f5] shrink-0" />
        <span className="ml-[16px] w-[17px] h-[17px] rounded-[3px] border border-[#ccc] bg-[#f7f7f7] shrink-0" />
        <span className="ml-[9px] text-[#c0c0c0]">内容脚本</span>
        <span className="ml-[15px] w-[2px] h-[28px] bg-[#d6e2f5] shrink-0" />
        <span className="ml-[15px] w-[18px] h-[18px] rounded-[3px] bg-[#d0d0d0] flex items-center justify-center shrink-0"><svg width="14" height="14" viewBox="0 0 14 14"><path d="M2.500 7.500 5.600 10.600 11.500 3.600" stroke="#fff" strokeWidth="2" fill="none" /></svg></span>
        <span className="ml-[9px] text-[#c0c0c0]">显示排除的函数</span>
      </div>
      <div className="h-[21px] border-b border-[#d6e2f5] flex items-center justify-end pr-[7px] bg-white">
        <svg width="12" height="18" viewBox="0 0 12 18"><path d="M6 0l5 6H1zM6 18l-5-6h10z" fill="#888" /><path d="M0 9h12" stroke="#888" strokeWidth="1" /></svg>
      </div>
      <div className="h-[26px] bg-white" />
    </div>
  );
}

export default function App() {
  return (
    <div className="w-[2558px] h-[1309px] overflow-hidden bg-[#f7f7f7] flex flex-col font-['Roboto','Noto_Sans_CJK_SC',sans-serif]">
      <TopBar />
      <div className="flex flex-1 min-h-0">
        <StockPage />
        <div className="ml-[7px] w-[1369px] shrink-0 bg-white rounded-t-[14px] rounded-b-[14px] overflow-hidden flex flex-col border-l border-[#e2e2e2]">
          <DevTabs />
          <ToolRow1 />
          <ToolRow2 />
          <Settings />
          <Overview />
          <div className="flex-1 min-h-0 flex">
            <NameColumn />
            <Detail />
          </div>
          <Drawer />
        </div>
      </div>
    </div>
  );
}
